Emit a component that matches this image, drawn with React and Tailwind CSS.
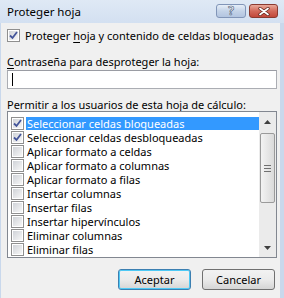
import React from "react";

const font = { fontFamily: '"Noto Sans", "Liberation Sans", sans-serif' };

function Check({ checked }) {
  return (
    <div className="w-[13px] h-[13px] shrink-0 border border-[#8f8f8f] bg-white p-px">
      <div className="w-full h-full bg-gradient-to-br from-[#d0d3d8] to-[#f7f7f7] flex items-center justify-center">
        {checked && (
          <svg width="9" height="9" viewBox="0 0 9 9">
            <path d="M1 4.5 L3.5 7 L8 1" fill="none" stroke="#44559a" strokeWidth="1.8" />
          </svg>
        )}
      </div>
    </div>
  );
}

const items = [
  ["Seleccionar celdas bloqueadas", true, true],
  ["Seleccionar celdas desbloqueadas", true, false],
  ["Aplicar formato a celdas", false, false],
  ["Aplicar formato a columnas", false, false],
  ["Aplicar formato a filas", false, false],
  ["Insertar columnas", false, false],
  ["Insertar filas", false, false],
  ["Insertar hipervínculos", false, false],
  ["Eliminar columnas", false, false],
  ["Eliminar filas", false, false],
];

export default function App() {
  return (
    <div
      className="w-[284px] h-[298px] bg-[#c9d8ec] flex flex-col overflow-hidden text-[11px] text-black leading-none"
      style={font}
    >
      <div className="h-[23px] shrink-0 flex items-start bg-gradient-to-b from-[#dfe9f5] to-[#d3e0f1]">
        <div className="pl-[7px] h-[23px] flex items-center text-[11.5px] text-black">Proteger hoja</div>
        <div className="ml-auto flex pt-[4px] pr-[6px] gap-[3px]">
          <div className="w-[30px] h-[14px] rounded-[3px] border border-[#8195b8] bg-gradient-to-b from-[#e6eef8] via-[#c4d3e8] to-[#b3c5e0] flex items-center justify-center">
            <span className="text-[12px] font-bold text-white leading-none" style={{ WebkitTextStroke: "0.6px #40506e" }}>?</span>
          </div>
          <div className="w-[29px] h-[14px] rounded-[3px] border border-[#8a3a30] bg-gradient-to-b from-[#e9a99a] via-[#d2695a] to-[#c2473a] flex items-center justify-center">
            <svg width="12" height="9" viewBox="0 0 12 9">
              <path d="M2 1.5 L10 7.5 M10 1.5 L2 7.5" stroke="#5a1f17" strokeWidth="3.2" strokeLinecap="round" />
              <path d="M2 1.5 L10 7.5 M10 1.5 L2 7.5" stroke="#ffffff" strokeWidth="1.8" strokeLinecap="round" />
            </svg>
          </div>
        </div>
      </div>
      <div className="flex-1 ml-px mr-[4px] bg-[#f0f0f0] pl-[6px] pr-[3px] flex flex-col">
        <div className="flex items-center mt-[6px] h-[13px]">
          <Check checked />
          <span className="ml-[5px]">
            Proteger <span className="underline underline-offset-2">h</span>oja y contenido de celdas bloqueadas
          </span>
        </div>
        <div className="mt-[12px] h-[14px] flex items-center">
          <span>
            <span className="underline underline-offset-2">C</span>ontraseña para desproteger la hoja:
          </span>
        </div>
        <div className="mt-[2px] h-[19px] border border-[#abadb3] border-t-[#9a9ca3] bg-white flex items-center pl-[4px]">
          <div className="w-px h-[13px] bg-black" />
        </div>
        <div className="mt-[9px] h-[13px] flex items-center">
          <span>
            <span className="underline underline-offset-2">P</span>ermitir a los usuarios de esta hoja de cálculo:
          </span>
        </div>
        <div className="h-[147px] border border-[#828790] bg-white flex">
          <div className="flex-1 pt-[5px] pl-[3px] flex flex-col">
            {items.map(([label, checked, sel]) => (
              <div key={label} className="h-[14px] flex items-start">
                <Check checked={checked} />
                <div
                  className={
                    "ml-[2px] flex-1 h-[13px] flex items-center pl-[1px] whitespace-nowrap " +
                    (sel ? "bg-[#3399ff] text-white" : "")
                  }
                >
                  {label}
                </div>
              </div>
            ))}
          </div>
          <div className="w-[17px] bg-[#ebebeb] flex flex-col items-center">
            <div className="h-[19px] flex items-center justify-center">
              <svg width="7" height="4" viewBox="0 0 7 4"><path d="M0 4 L3.5 0 L7 4Z" fill="#404040" /></svg>
            </div>
            <div className="w-[15px] h-[70px] mt-[2px] rounded-[2px] border border-[#9a9a9a] bg-gradient-to-r from-[#f3f3f3] to-[#dadada] flex flex-col items-center justify-center gap-[2px]">
              <div className="w-[7px] h-px bg-[#707070]" />
              <div className="w-[7px] h-px bg-[#707070]" />
              <div className="w-[7px] h-px bg-[#707070]" />
            </div>
            <div className="mt-auto h-[18px] flex items-center justify-center">
              <svg width="7" height="4" viewBox="0 0 7 4"><path d="M0 0 L3.5 4 L7 0Z" fill="#404040" /></svg>
            </div>
          </div>
        </div>
        <div className="mt-[11px] flex justify-end gap-[11px] pr-[2px]">
          <div className="w-[73px] h-[21px] rounded-[3px] border border-[#3c7fb1] shadow-[inset_0_0_0_1px_#4ec9f5] bg-gradient-to-b from-[#f2f2f2] via-[#ebebeb] to-[#d5d5d5] flex items-center justify-center">
            Aceptar
          </div>
          <div className="w-[73px] h-[21px] rounded-[3px] border border-[#707070] bg-gradient-to-b from-[#f2f2f2] via-[#ebebeb] to-[#d5d5d5] flex items-center justify-center">
            Cancelar
          </div>
        </div>
      </div>
    </div>
  );
}
